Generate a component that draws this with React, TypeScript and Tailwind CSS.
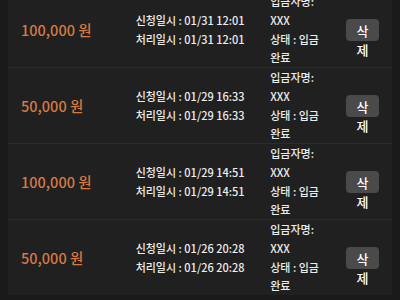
const ROWS = [
  { amount: "100,000 원", requested: "01/31 12:01", processed: "01/31 12:01" },
  { amount: "50,000 원", requested: "01/29 16:33", processed: "01/29 16:33" },
  { amount: "100,000 원", requested: "01/29 14:51", processed: "01/29 14:51" },
  { amount: "50,000 원", requested: "01/26 20:28", processed: "01/26 20:28" },
];

export default function App() {
  return (
    <div
      className="h-[300px] w-[400px] overflow-hidden bg-[#1a1a1a] px-2 text-[#ececec]"
      style={{ fontFamily: '"Noto Sans CJK KR", "Noto Sans", sans-serif' }}
    >
      <div className="-mt-2 bg-[#202020]">
        {ROWS.map((r, i) => (
          <div
            key={i}
            className={`flex items-center px-[13px] ${i < ROWS.length - 1 ? "border-b border-[#2c2c2c]" : ""}`}
          >
            <div className="w-[115px] text-[14.5px] font-medium text-[#d47a45]">{r.amount}</div>
            <div className="w-[135px] text-[11px] font-medium leading-[18.75px]">
              <p>신청일시 : {r.requested}</p>
              <p>처리일시 : {r.processed}</p>
            </div>
            <div className="w-[62px] break-keep text-[11px] font-medium leading-[18.75px]">
              <p>입금자명: XXX</p>
              <p>상태 : 입금 완료</p>
            </div>
            <div className="ml-[14px] flex">
              <button className="h-[22px] w-[33px] rounded bg-[#4a4a4a] px-2 pt-[2px] text-[13px] leading-[19px] font-medium text-white">
                삭제
              </button>
            </div>
          </div>
        ))}
      </div>
    </div>
  );
}
